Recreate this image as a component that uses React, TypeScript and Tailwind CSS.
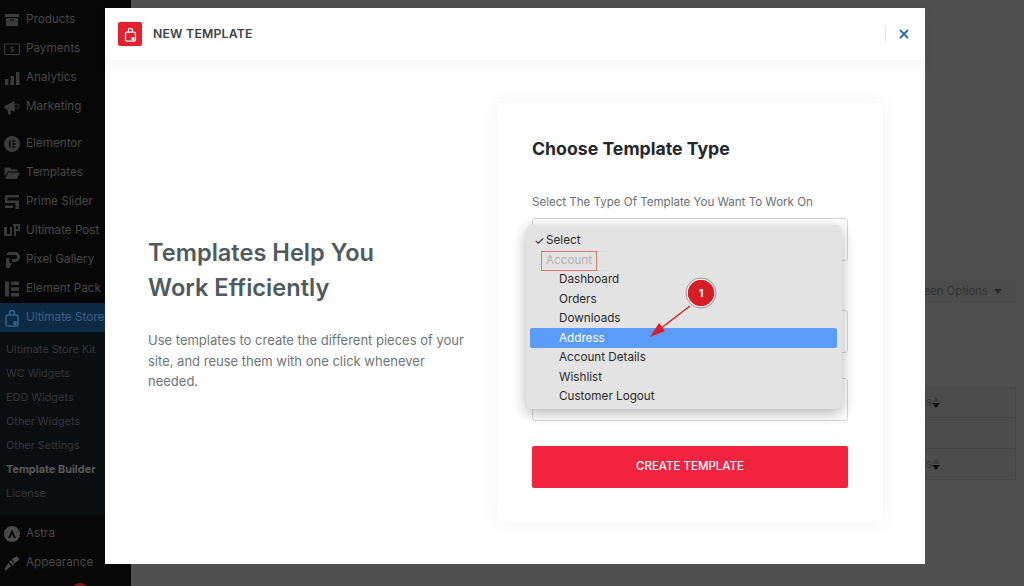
import React from 'react';

const font = { fontFamily: 'Inter, "Liberation Sans", sans-serif' };

const iconProps = { width: 18, height: 18, viewBox: '0 0 18 18', fill: '#3a3a3a' };

const ProductsIcon = () => (
  <svg {...iconProps}><path d="M2 3h14v3H2zM3 7h12v8H3z" /><path d="M7 8.500h4v1H7z" fill="#070707" /></svg>
);
const PaymentsIcon = () => (
  <svg {...iconProps}><rect x="1.500" y="4" width="15" height="10.500" rx="1" fill="none" stroke="#3a3a3a" strokeWidth="1.200" /><path d="M9.600 6h-1v.7c-.9.2-1.400.8-1.400 1.500 0 1.700 2.600 1.200 2.600 2.100 0 .3-.3.5-.8.5s-1-.2-1.400-.5l-.4.8c.3.3.9.5 1.400.6v.8h1v-.8c.9-.2 1.400-.8 1.400-1.500 0-1.700-2.600-1.300-2.600-2.100 0-.3.3-.4.7-.4s.8.1 1.200.4l.4-.8c-.3-.2-.7-.4-1.100-.5z" /></svg>
);
const AnalyticsIcon = () => (
  <svg {...iconProps}><path d="M2 10h3.500v6H2zM7.500 7H11v9H7.500zM13 3h3.500v13H13z" /></svg>
);
const MarketingIcon = () => (
  <svg {...iconProps}><path d="M1.500 8l10-5v11l-4-1.500L8 16l-2.500.8-1-5-3-1.300z" /><circle cx="13.500" cy="8.500" r="2.500" fill="none" stroke="#3a3a3a" /></svg>
);
const ElementorIcon = () => (
  <svg {...iconProps}><path fillRule="evenodd" d="M9 1a8 8 0 1 1 0 16A8 8 0 0 1 9 1zM6 5.500v7h1.500v-7zM9 5.500V7h3.500V5.500zM9 8.250v1.500h3.500v-1.500zM9 11v1.500h3.500V11z" /></svg>
);
const TemplatesIcon = () => (
  <svg {...iconProps}><path d="M1.500 3.500h5l2 2h6v2H5L1.500 13zM5.500 8.500h11.500L14 15H1.800z" /></svg>
);
const PrimeIcon = () => (
  <svg {...iconProps}><path d="M2 2h14v2.500H4.500v3H16V16h-3.500v-6H2zM2 12.500h8V15H2z" /></svg>
);
const PostIcon = () => (
  <svg {...iconProps}><path d="M1 5h3v7h3V5h2v9H1zM10 2h7v7h-4v5h-2V4h-1zM13 4v3h2V4z" /></svg>
);
const PixelIcon = () => (
  <svg {...iconProps}><path d="M5 1h7a5 5 0 0 1 0 10H9V8h3a2 2 0 0 0 0-4H3.500zM3 7h3.500v5H9l-2.500 5H3z" /></svg>
);
const PackIcon = () => (
  <svg {...iconProps}><path d="M2 1.500h4v15H2zM8 1.500h8V5H8zM8 7.200h8v3.500H8zM8 13h8v3.500H8z" /></svg>
);
const StoreIcon = ({ color = '#3a5f88', size = 18 }: { color?: string; size?: number }) => (
  <svg width={size} height={size} viewBox="0 0 18 18" fill="none" stroke={color} strokeWidth="1.500">
    <rect x="3" y="6" width="12" height="11" rx="2" />
    <path d="M6.500 6V4a2.500 2.500 0 0 1 5 0v2" />
    <circle cx="12" cy="14" r="1.300" fill={color} />
  </svg>
);
const AstraIcon = () => (
  <svg {...iconProps} fill="#4a4a4a"><path fillRule="evenodd" d="M9 1a8 8 0 1 1 0 16A8 8 0 0 1 9 1zM9 4.500L5 13h2.200L9 9l1.800 4H13z" /></svg>
);
const AppearanceIcon = () => (
  <svg {...iconProps} fill="#4a4a4a"><path d="M9 5l5-3 2.500 3.500-5 4zM8 6l3.500 4-2 1.500-3.500-4zM5.500 9l2.500 3-5 4.500-1.500-1.500z" /></svg>
);

const topItems: [string, React.ReactNode][] = [
  ['Products', <ProductsIcon />],
  ['Payments', <PaymentsIcon />],
  ['Analytics', <AnalyticsIcon />],
  ['Marketing', <MarketingIcon />],
];
const pluginItems: [string, React.ReactNode][] = [
  ['Elementor', <ElementorIcon />],
  ['Templates', <TemplatesIcon />],
  ['Prime Slider', <PrimeIcon />],
  ['Ultimate Post', <PostIcon />],
  ['Pixel Gallery', <PixelIcon />],
  ['Element Pack', <PackIcon />],
];
const subItems = ['Ultimate Store Kit', 'WC Widgets', 'EDD Widgets', 'Other Widgets', 'Other Settings', 'Template Builder', 'License'];
const menuItems = ['Dashboard', 'Orders', 'Downloads', 'Address', 'Account Details', 'Wishlist', 'Customer Logout'];

const SideRow = ({ label, icon, color = 'text-[#484848]' }: { label: string; icon: React.ReactNode; color?: string }) => (
  <div className={`flex h-[29px] items-center gap-[5px] pl-[3px] text-[11.700px] whitespace-nowrap ${color}`}>
    <span className="flex w-[18px] justify-center">{icon}</span>
    {label}
  </div>
);

const Sorter = () => (
  <div className="flex flex-col items-center gap-[1px]">
    <div className="h-0 w-0 border-x-[4px] border-b-[5px] border-x-transparent border-b-[#3c3c3c]" />
    <div className="h-0 w-0 border-x-[4px] border-t-[5px] border-x-transparent border-t-[#111111]" />
  </div>
);

const SelectBox = ({ className }: { className: string }) => (
  <div className={`h-[43px] rounded-[3px] border border-[#d8d8d8] bg-white ${className}`} />
);

export default function App() {
  return (
    <div className="relative flex h-[586px] w-[1024px] overflow-hidden bg-[#505050]" style={font}>
      <aside className="relative w-[131px] shrink-0 overflow-hidden bg-[#070707] pt-[5px]">
        {topItems.map(([label, icon]) => (
          <SideRow key={label} label={label} icon={icon} />
        ))}
        <div className="h-[8px]" />
        {pluginItems.map(([label, icon]) => (
          <SideRow key={label} label={label} icon={icon} />
        ))}
        <div className="bg-[#0d2a44]">
          <SideRow label="Ultimate Store" icon={<StoreIcon />} color="text-[#3a5f88]" />
        </div>
        <div className="bg-[#0b0e11] pt-[5px] pb-[9px] pl-[6px]">
          {subItems.map((item) => (
            <div
              key={item}
              className={`flex h-[24px] items-center text-[10.900px] whitespace-nowrap ${
                item === 'Template Builder' ? 'font-bold text-[#5a5a5a]' : 'text-[#333639]'
              }`}
            >
              {item}
            </div>
          ))}
        </div>
        <div className="h-[5px]" />
        <SideRow label="Astra" icon={<AstraIcon />} />
        <SideRow label="Appearance" icon={<AppearanceIcon />} />
        <span className="absolute top-[583px] left-[72px] h-[16px] w-[16px] rounded-full bg-[#7a1a1a]" />
      </aside>

      <main className="flex-1 pt-[280px] pr-[8px] text-[11.300px] text-[#333333]">
        <div className="ml-auto flex h-[23px] w-[91px] items-center justify-end gap-[6px] bg-[#4c4c4c] pr-[14px] whitespace-nowrap">
          <span>Screen Options</span>
          <span className="h-0 w-0 border-x-[4px] border-t-[5px] border-x-transparent border-t-[#2a2a2a]" />
        </div>
        <div className="mt-[84px] ml-auto w-[91px] border border-[#464646] bg-[#4c4c4c]">
          <div className="flex h-[30px] items-center border-b border-[#444444]">
            <span>s</span>
            <Sorter />
          </div>
          <div className="h-[31px] border-b border-[#444444]" />
          <div className="flex h-[30px] items-center">
            <span>s</span>
            <Sorter />
          </div>
        </div>
      </main>

      <div className="absolute top-[8px] left-[105px] flex h-[556px] w-[820px] flex-col bg-white">
        <header className="flex h-[52px] items-center pl-[13px] shadow-[0_4px_14px_rgba(0,0,0,0.05)]">
          <div className="flex h-[24px] w-[24px] items-center justify-center rounded-[2px] bg-[#e5202e]">
            <StoreIcon color="#ffffff" size={15} />
          </div>
          <div className="ml-[11px] text-[12.250px] font-semibold tracking-[0.2px] text-[#3e4245]">NEW TEMPLATE</div>
          <div className="mr-[16px] ml-auto flex items-center gap-[13px]">
            <div className="h-[16px] w-px bg-[#e6e6e6]" />
            <svg width="10" height="10" viewBox="0 0 10 10" stroke="#1f6ea8" strokeWidth="1.800">
              <path d="M1 1l8 8M9 1l-8 8" />
            </svg>
          </div>
        </header>

        <div className="flex flex-1 pt-[43px] pl-[43px]">
          <div className="w-[320px] pt-[132px]">
            <h2 className="text-[23.600px] leading-[35px] font-semibold text-[#4f5a5e]">
              Templates Help You
              <br />
              Work Efficiently
            </h2>
            <p className="mt-[25px] text-[13px] leading-[20.500px] text-[#6d7679]">
              Use templates to create the different pieces of your site, and reuse them with one click whenever needed.
            </p>
          </div>

          <div className="relative ml-[29px] h-[419px] w-[386px] px-[35px] pt-[34px] shadow-[0_0_22px_rgba(0,0,0,0.05)]">
            <h3 className="text-[17.700px] leading-[24px] font-bold text-[#24272c]">Choose Template Type</h3>
            <div className="mt-[33px] text-[11.550px] leading-[16px] text-[#6a6f73]">Select The Type Of Template You Want To Work On</div>
            <SelectBox className="mt-[8px]" />
            <SelectBox className="mt-[49px]" />
            <SelectBox className="mt-[25px]" />
            <div className="mt-[25px] flex h-[42px] items-center justify-center rounded-[2px] bg-[#f1233f] text-[11.500px] font-medium text-white">
              CREATE TEMPLATE
            </div>

            <div className="absolute top-[122px] left-[29px] h-[184px] w-[316px] rounded-[6px] bg-[#e3e3e3] pt-[5px] pr-[5px] pl-[4px] text-[11.700px] text-[#2b2b2b] shadow-[0_4px_14px_rgba(0,0,0,0.3)]">
              <div className="flex h-[20px] items-center pt-[2px] pl-[4px]">
                <span className="w-[12px] text-[12px]">✓</span>Select
              </div>
              <div className="flex h-[19.500px] items-center pt-[2px] pl-[16px]">
                <span className="relative text-[#b3b3b3]">
                  Account
                  <span className="absolute -inset-x-[5px] -inset-y-[1px] border border-[#e8756c]" />
                </span>
              </div>
              {menuItems.map((item) => (
                <div
                  key={item}
                  className={`flex h-[19.500px] items-center rounded-[2px] pt-[2px] pl-[29px] ${item === 'Address' ? 'bg-[#5a9cf8] text-white' : ''}`}
                >
                  {item}
                </div>
              ))}
            </div>

            <svg className="absolute top-[172px] left-[146px]" width="76" height="70" viewBox="0 0 76 70">
              <path d="M47 31L13 57" stroke="#dc1f26" strokeWidth="1.500" />
              <path d="M7 62l9-14 6 8z" fill="#dc1f26" />
              <circle cx="58" cy="18" r="14" fill="#d81e25" stroke="#ffffff" strokeWidth="1.500" />
              <circle cx="58" cy="18" r="15" fill="none" stroke="#555555" strokeWidth="0.600" />
            </svg>
            <div className="absolute top-[182px] left-[196px] flex h-[16px] w-[16px] items-center justify-center text-[11px] font-bold text-white">1</div>
          </div>
        </div>
      </div>
    </div>
  );
}
